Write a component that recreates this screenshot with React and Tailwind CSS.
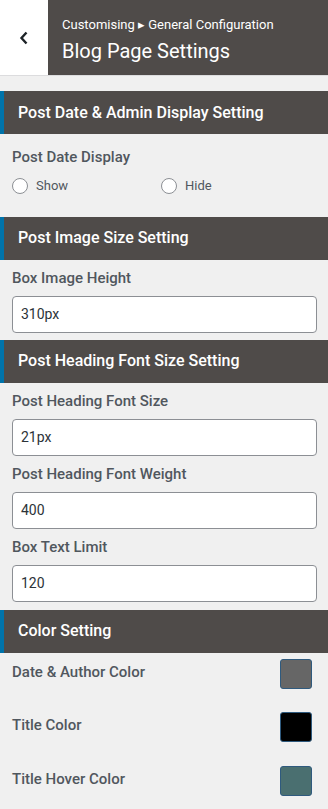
import React from 'react';

const dark = 'bg-[#4f4b49]';

function SectionHeader({ title }) {
  return (
    <div className="flex h-[43px] items-center border-l-4 border-[#0073aa] bg-[#4f4b49] pl-[14px]">
      <span className="text-[16px] font-medium text-white">{title}</span>
    </div>
  );
}

function TextField({ label, value }) {
  return (
    <div className="px-3 pt-[10px]">
      <div className="mb-[10px] text-[15px] font-medium leading-[16px] text-[#50575e]">{label}</div>
      <div className="flex h-[37px] w-[305px] items-center rounded-[4px] border border-[#8c8f94] bg-white pl-[8px] text-[14px] text-[#2c3338]">
        {value}
      </div>
    </div>
  );
}

function Radio({ label }) {
  return (
    <label className="flex items-center gap-[8px] text-[13px] text-[#50575e]">
      <span className="h-4 w-4 rounded-full border border-[#8c8f94] bg-white" />
      {label}
    </label>
  );
}

function ColorRow({ label, color }) {
  return (
    <div className="flex h-[30px] items-center justify-between pl-3 pr-4">
      <span className="-mt-[3px] text-[15px] font-medium text-[#50575e]">{label}</span>
      <span
        className="h-[30px] w-[32px] rounded-[3px] border border-[#2f5a7e]"
        style={{ backgroundColor: color }}
      />
    </div>
  );
}

export default function App() {
  return (
    <div className="min-h-[809px] w-[328px] bg-[#f0f0f0]" style={{ fontFamily: 'Roboto, "Liberation Sans", sans-serif' }}>
      {/* header */}
      <div className="flex h-[76px] border-b border-[#dcdcde]">
        <button className="flex w-[48px] items-center justify-center bg-white">
          <svg width="10" height="14" viewBox="0 0 10 14" fill="none">
            <path d="M7.5 1.5 2.5 7l5 5.5" stroke="#1d2327" strokeWidth="2.4" />
          </svg>
        </button>
        <div className={`flex flex-1 flex-col justify-center ${dark} pl-[14px] pt-[4px]`}>
          <div className="text-[13px] leading-[16px] text-white">Customising ▸ General Configuration</div>
          <div className="mt-[6px] text-[20px] leading-[24px] text-white">Blog Page Settings</div>
        </div>
      </div>

      <div className="pt-[15px]">
        <SectionHeader title="Post Date & Admin Display Setting" />
        <div className="px-3 pb-[21px] pt-[15px]">
          <div className="text-[15px] font-medium leading-[16px] text-[#50575e]">Post Date Display</div>
          <div className="mt-[11px] flex">
            <div className="w-[149px]">
              <Radio label="Show" />
            </div>
            <Radio label="Hide" />
          </div>
        </div>

        <SectionHeader title="Post Image Size Setting" />
        <div className="pb-[7px]">
          <TextField label="Box Image Height" value="310px" />
        </div>

        <SectionHeader title="Post Heading Font Size Setting" />
        <div className="pb-[8px]">
          <TextField label="Post Heading Font Size" value="21px" />
          <TextField label="Post Heading Font Weight" value="400" />
          <TextField label="Box Text Limit" value="120" />
        </div>

        <SectionHeader title="Color Setting" />
        <div className="flex flex-col gap-[23.5px] pt-[6px]">
          <ColorRow label="Date & Author Color" color="#666666" />
          <ColorRow label="Title Color" color="#000000" />
          <ColorRow label="Title Hover Color" color="#4a6f70" />
        </div>
      </div>
    </div>
  );
}
